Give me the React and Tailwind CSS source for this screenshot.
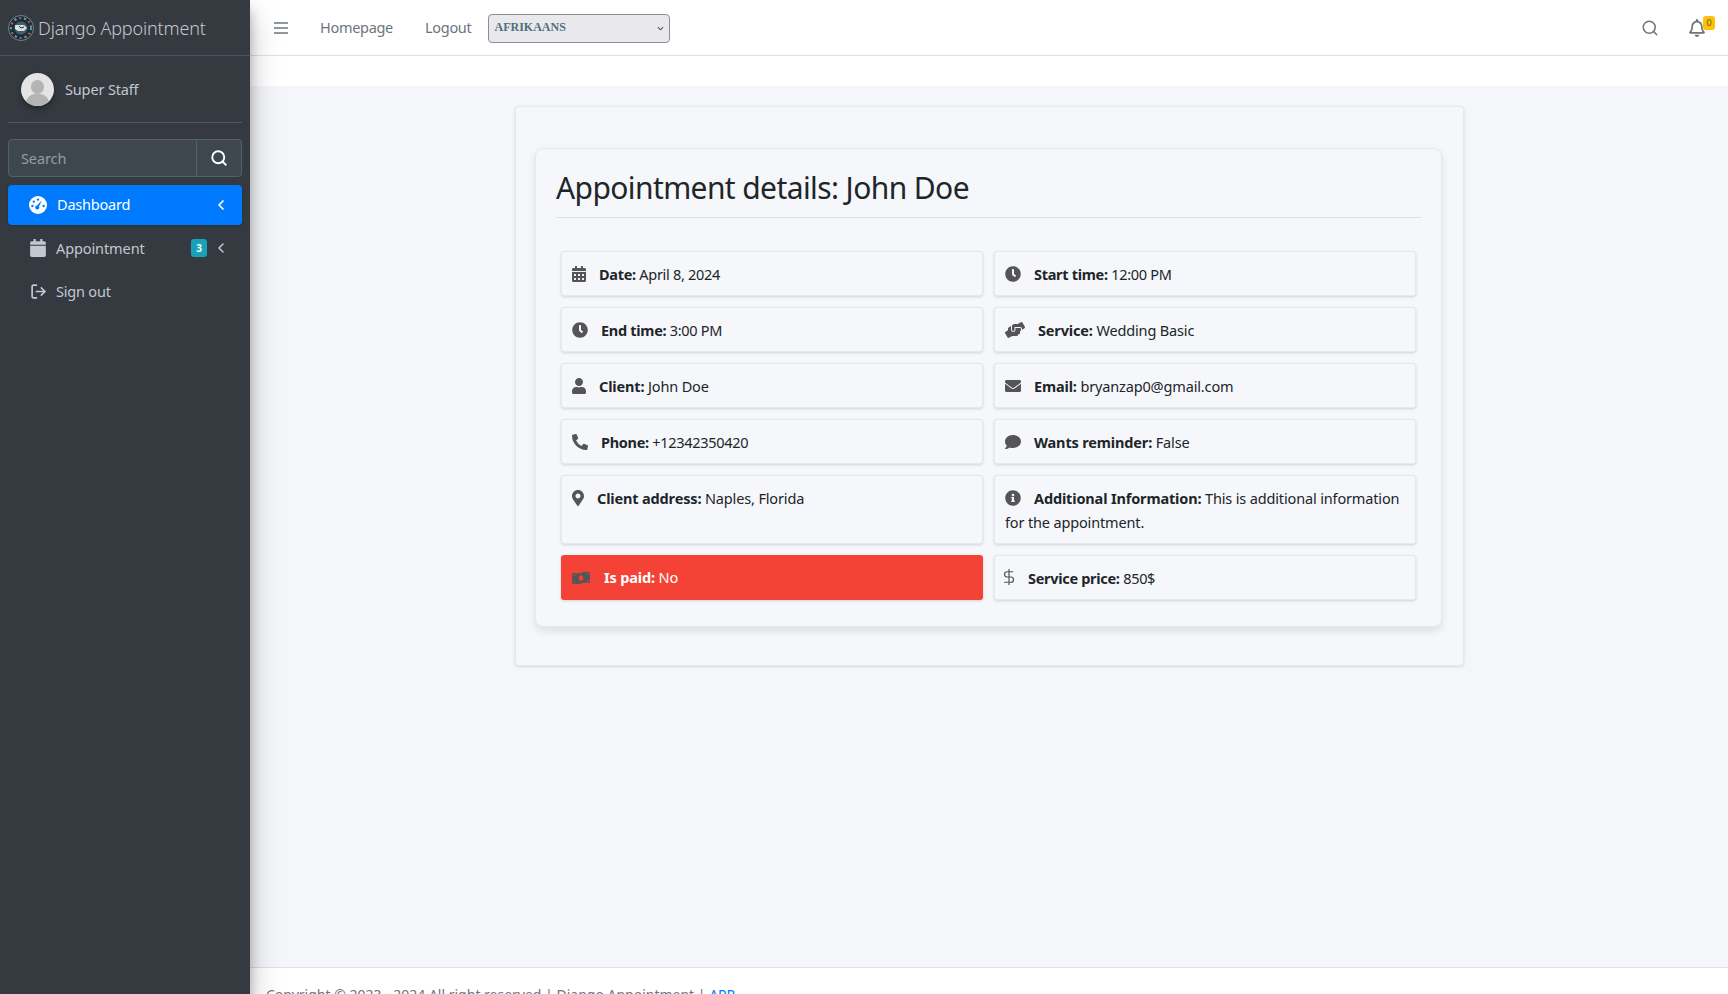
import React from 'react';
import {
  FaCalendar, FaCalendarAlt, FaClock, FaComment,
  FaEnvelope, FaHandsHelping, FaInfoCircle, FaMapMarkerAlt, FaMoneyBillWave, FaPhoneAlt,
  FaRegBell, FaUser,
} from 'react-icons/fa';
import { LuChevronLeft, LuDollarSign, LuLogOut, LuSearch } from 'react-icons/lu';

const font = { fontFamily: '"Noto Sans", sans-serif' };

const details = [
  { icon: FaCalendarAlt, size: 'w-[14px] h-[16px]', gap: 'mr-[13px]', label: 'Date:', value: 'April 8, 2024', tight: true },
  { icon: FaClock, size: 'w-[16px] h-[16px]', gap: 'mr-[13px]', label: 'Start time:', value: '12:00 PM', tight: true },
  { icon: FaClock, size: 'w-[16px] h-[16px]', gap: 'mr-[13px]', label: 'End time:', value: '3:00 PM', tight: true },
  { icon: FaHandsHelping, size: 'w-[20px] h-[16px]', gap: 'mr-[13px]', label: 'Service:', value: 'Wedding Basic' },
  { icon: FaUser, size: 'w-[14px] h-[16px]', gap: 'mr-[13px]', label: 'Client:', value: 'John Doe' },
  { icon: FaEnvelope, size: 'w-[16px] h-[16px]', gap: 'mr-[13px]', label: 'Email:', value: 'bryanzap0@gmail.com' },
  { icon: FaPhoneAlt, size: 'w-[16px] h-[16px]', gap: 'mr-[13px]', label: 'Phone:', value: '+12342350420', tight: true },
  { icon: FaComment, size: 'w-[16px] h-[16px]', gap: 'mr-[13px]', label: 'Wants reminder:', value: 'False' },
  { icon: FaMapMarkerAlt, size: 'w-[12px] h-[16px]', gap: 'mr-[13px]', label: 'Client address:', value: 'Naples, Florida' },
  { icon: FaInfoCircle, size: 'w-[16px] h-[16px]', gap: 'mr-[13px]', label: 'Additional Information:', value: 'This is additional information for the appointment.' },
];

const Logo = () => (
  <svg viewBox="0 0 26 26" className="w-[26px] h-[26px] shrink-0">
    <circle cx="13" cy="13" r="12.5" fill="#1d2f3a" stroke="#6f8791" />
    <circle cx="13" cy="13" r="10" fill="none" stroke="#c95a3f" strokeWidth="2" strokeDasharray="2 3" />
    <circle cx="13" cy="13" r="10" fill="none" stroke="#4fa3b8" strokeWidth="2" strokeDasharray="2 8" />
    <circle cx="13" cy="13" r="6.5" fill="#41606e" />
    <path d="M7 10h9l3 3-3 3H10l-3-2z" fill="#d8dfe0" />
    <path d="M11 11l2 2 3-1" fill="none" stroke="#1d2f3a" strokeWidth="1" />
  </svg>
);

const Gauge = () => (
  <svg viewBox="0 0 18 18" className="w-[18px] h-[18px] shrink-0">
    <circle cx="9" cy="9" r="9" fill="#fff" />
    <circle cx="9" cy="3.6" r="1.2" fill="#007bff" />
    <circle cx="4.8" cy="5.6" r="1.2" fill="#007bff" />
    <circle cx="3.4" cy="10" r="1.2" fill="#007bff" />
    <circle cx="14.6" cy="10" r="1.2" fill="#007bff" />
    <path d="M13 4.2l-3 6.2a2 2 0 1 1-2-1z" fill="#007bff" />
  </svg>
);

const Avatar = () => (
  <div className="w-[33px] h-[33px] rounded-full bg-[#e4e4e4] overflow-hidden relative shadow-[0_3px_6px_rgba(0,0,0,0.35)] shrink-0">
    <div className="absolute left-[10px] top-[7px] w-[13px] h-[14px] rounded-full bg-[#b4b4b4]" />
    <div className="absolute left-[5px] top-[21px] w-[23px] h-[18px] rounded-full bg-[#b4b4b4]" />
  </div>
);

const Sidebar = () => (
  <aside className="w-[250px] shrink-0 bg-[#343a40] text-[#c2c7d0] z-10 shadow-[0_14px_28px_rgba(0,0,0,0.25),0_10px_10px_rgba(0,0,0,0.22)]">
    <div className="h-[56px] flex items-center pl-[8px] border-b border-[#4b545c]">
      <Logo />
      <span className="ml-[4px] pt-[1px] text-[18px] font-light tracking-[-0.15px]">Django Appointment</span>
    </div>
    <div className="mx-[8px] h-[67px] flex items-center pl-[13px] border-b border-[#4f5962]">
      <Avatar />
      <span className="ml-[11px] pt-[1px] text-[14.5px] tracking-[-0.15px]">Super Staff</span>
    </div>
    <div className="mx-[8px] mt-[16px] h-[38px] flex rounded-[4px] border border-[#56606a] bg-[#3f474e]">
      <input
        placeholder="Search"
        className="flex-1 min-w-0 pl-[12px] pt-[1px] text-[14.5px] tracking-[-0.1px] outline-none placeholder:text-[#969ca3]"
      />
      <button className="w-[45px] flex items-center justify-center border-l border-[#56606a] text-white">
        <LuSearch className="w-[18px] h-[18px]" strokeWidth={2.5} />
      </button>
    </div>
    <nav className="mx-[8px] mt-[8px] flex flex-col gap-[3px] text-[14.5px] tracking-[-0.2px]">
      <a className="h-[40px] flex items-center pl-[21px] pr-[13px] rounded-[4px] bg-[#007bff] text-white shadow-[0_1px_3px_rgba(0,0,0,0.2)]">
        <Gauge />
        <span className="ml-[10px] flex-1">Dashboard</span>
        <LuChevronLeft className="w-[16px] h-[16px]" strokeWidth={2.6} />
      </a>
      <a className="h-[40px] flex items-center pl-[22px] pr-[13px]">
        <FaCalendar className="w-[16px] h-[18px]" />
        <span className="ml-[10px] flex-1 pt-[1px] tracking-[-0.1px]">Appointment</span>
        <span className="w-[16px] h-[18px] rounded-[3px] bg-[#17a2b8] text-white text-[10px] font-bold flex items-center justify-center mr-[6px]">3</span>
        <LuChevronLeft className="w-[16px] h-[16px]" strokeWidth={2.4} />
      </a>
      <a className="h-[40px] flex items-center pl-[22px] pr-[13px]">
        <LuLogOut className="w-[17px] h-[17px]" strokeWidth={2.4} />
        <span className="ml-[9px] flex-1 pt-[1px]">Sign out</span>
      </a>
    </nav>
  </aside>
);

const Navbar = () => (
  <header className="h-[56px] shrink-0 flex items-center bg-white border-b border-[#dee2e6] text-[#6c757d]">
    <svg viewBox="0 0 14 12" className="ml-[24px] w-[14px] h-[12px]">
      <path d="M0 1h14M0 6h14M0 11h14" stroke="#6c757d" strokeWidth="1.7" />
    </svg>
    <a className="ml-[32px] text-[14.5px] tracking-[-0.3px]">Homepage</a>
    <a className="ml-[32px] text-[14.5px] tracking-[-0.3px]">Logout</a>
    <div className="relative ml-[17px] mt-[1px]">
      <select className="appearance-none block w-[182px] h-[29px] pl-[5px] pb-[3px] rounded-[4px] border border-[#8a8f9c] bg-[#e9e9ed] text-[12px] font-bold text-[#4f6f7d] font-['Liberation_Serif',serif]">
        <option>AFRIKAANS</option>
      </select>
      <svg viewBox="0 0 8 5" className="absolute right-[6px] top-[12px] w-[7px] h-[5px] pointer-events-none">
        <path d="M1 1l3 3 3-3" fill="none" stroke="#555" strokeWidth="1.2" />
      </svg>
    </div>
    <div className="ml-auto mr-[12px] flex items-center">
      <LuSearch className="w-[18px] h-[18px]" />
      <div className="relative ml-[30px] mr-[11px]">
        <FaRegBell className="w-[16px] h-[18px]" />
        <span className="absolute -top-[3px] left-[14px] w-[12px] h-[14px] rounded-[3px] bg-[#ffc107] text-[#6b5a10] text-[9px] flex items-center justify-center">0</span>
      </div>
    </div>
  </header>
);

const DetailItem = ({ item }) => {
  const Icon = item.icon;
  return (
    <div className={`min-h-[45px] px-[10px] pt-[10px] pb-[9px] rounded-[3px] border border-[#e6e8ec] bg-[#f5f7fb] shadow-[0_1px_3px_rgba(0,0,0,0.15)] text-[14.5px] leading-[24px] text-[#212529] ${item.tight ? 'tracking-[-0.3px]' : 'tracking-[-0.15px]'}`}>
      <Icon className={`inline align-[-2px] text-[#555] ${item.size} ${item.gap}`} strokeWidth={item.stroke} />
      <strong className="font-bold">{item.label}</strong> {item.value}
    </div>
  );
};

export default function App() {
  return (
    <div className="h-screen flex overflow-hidden bg-white" style={font}>
      <Sidebar />
      <div className="flex-1 min-w-0 flex flex-col">
        <Navbar />
        <div className="h-[30px] shrink-0 bg-white" />
        <main className="h-[881px] shrink-0 bg-[#f4f6f9] pt-[20px]">
          <div className="w-[949px] h-[560px] ml-[265px] pl-[19px] pr-[21px] pt-[41px] rounded-[4px] border border-[#e6e8ec] bg-[#f5f7fb] shadow-[0_1px_3px_rgba(0,0,0,0.12)]">
            <section className="h-[479px] px-[20px] rounded-[8px] border border-[#e6e8ec] bg-[#f5f7fb] shadow-[0_4px_8px_rgba(0,0,0,0.1)]">
              <h2 className="h-[69px] pt-[19px] text-[30px] leading-[40px] tracking-[-0.6px] text-[#212529] border-b border-[#dee2e6]">
                Appointment details: John Doe
              </h2>
              <div className="mt-[33px] mx-[5px] grid grid-cols-2 gap-x-[11px] gap-y-[11px]">
                {details.map((item) => (
                  <DetailItem key={item.label} item={item} />
                ))}
                <div className="min-h-[45px] px-[11px] pt-[10px] pb-[10px] rounded-[3px] bg-[#f44336] shadow-[0_1px_3px_rgba(0,0,0,0.15)] text-[14.5px] leading-[24px] tracking-[-0.15px] text-white">
                  <FaMoneyBillWave className="inline align-[-3px] w-[18px] h-[16px] mr-[14px] text-[#555]" />
                  <strong className="font-bold">Is paid:</strong> No
                </div>
                <DetailItem
                  item={{ icon: LuDollarSign, size: 'w-[18px] h-[18px] -ml-[5px]', gap: 'mr-[10px]', label: 'Service price:', value: '850$', tight: true, stroke: 1.6 }}
                />
              </div>
            </section>
          </div>
        </main>
        <footer className="shrink-0 h-[57px] border-t border-[#dee2e6] bg-white px-[16px] pt-[16px] text-[14px] text-[#6c757d]">
          Copyright © 2023 - 2024 All right reserved | Django Appointment | <a className="text-[#007bff]">APP</a>
        </footer>
      </div>
    </div>
  );
}
